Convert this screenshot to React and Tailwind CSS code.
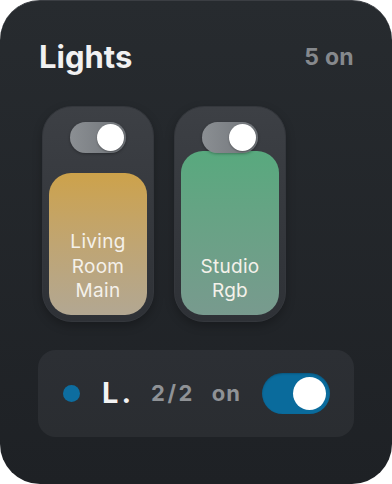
import React from 'react'

const lights = [
  { name: 'Living Room Main', fill: 142, cls: 'bg-gradient-to-b from-[#cda24a] to-[#b2a792]' },
  { name: 'Studio Rgb', fill: 164, cls: 'bg-gradient-to-b from-[#58a97e] to-[#789a8e]' },
]

function Tile({ light }) {
  return (
    <div className="relative w-[112px] h-[216px] rounded-[30px] bg-gradient-to-b from-[#3d4045] to-[#2e3136] border border-[#34373c] shadow-[0_4px_10px_rgba(0,0,0,0.25)] p-[6px] flex flex-col justify-end">
      <div
        className={`rounded-[22px] ${light.cls} flex flex-col justify-end items-center pb-[11px]`}
        style={{ height: light.fill }}
      >
        <p className="text-[19px] leading-[24.5px] text-center text-[#f4f1ea] tracking-[0.3px] px-1">{light.name}</p>
      </div>
      <div className="absolute top-[15px] left-1/2 -translate-x-1/2 w-[56px] h-[31px] rounded-full bg-gradient-to-r from-[#8b8f93] to-[#6f7378] flex items-center justify-end pr-[2px] shadow-[0_1px_3px_rgba(0,0,0,0.3)]">
        <div className="w-[27px] h-[27px] rounded-full bg-white shadow-[0_1px_2px_rgba(0,0,0,0.3)]" />
      </div>
    </div>
  )
}

export default function App() {
  return (
    <div className="w-[392px] h-[484px] bg-white" style={{ fontFamily: 'Inter, "Noto Sans", sans-serif' }}>
      <div className="w-full h-full rounded-[40px] bg-gradient-to-b from-[#272b2f] to-[#1e2125] border-t border-[#3b3e43] px-[38px] pt-[39px]">
        <div className="flex items-center justify-between">
          <h1 className="text-[31px] leading-[34px] font-bold text-[#f1f1f2] ml-[1px]">Lights</h1>
          <span className="text-[23px] font-bold text-[#86898d] tracking-[0.3px]">5 on</span>
        </div>
        <div className="flex gap-[20px] mt-[31px] ml-[4px]">
          {lights.map((l) => (
            <Tile key={l.name} light={l} />
          ))}
        </div>
        <div className="mt-[28px] h-[87px] rounded-[18px] bg-gradient-to-b from-[#2c2f34] to-[#2a2d31] flex items-center pl-[25px] pr-[24px]">
          <div className="w-[17px] h-[17px] rounded-full bg-[#0d6d9f]" />
          <span className="ml-[22px] text-[29px] font-bold text-[#f3f3f3] tracking-[3px] whitespace-nowrap">L.</span>
          <div className="ml-[17px] flex items-center gap-[17px] text-[22px] font-bold text-[#8f9296]">
            <span className="tracking-[2.5px]">2/2</span>
            <span className="tracking-[1px]">on</span>
          </div>
          <div className="ml-auto w-[68px] h-[41px] rounded-full bg-[#0a6b9c] flex items-center justify-end pr-[4px] shadow-[inset_0_1px_2px_rgba(0,0,0,0.2)]">
            <div className="w-[33px] h-[33px] rounded-full bg-white" />
          </div>
        </div>
      </div>
    </div>
  )
}
